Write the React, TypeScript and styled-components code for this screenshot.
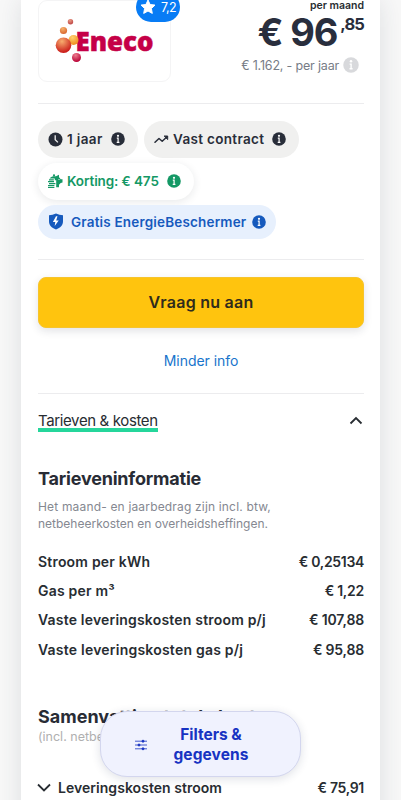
import React from "react";
import styled, { createGlobalStyle, css } from "styled-components";

const Global = createGlobalStyle`
  * { box-sizing: border-box; }
  html, body { margin: 0; height: 800px; overflow: hidden; background: #f8f8f8; }
  body { font-family: Inter, "Noto Sans", sans-serif; color: #282d32; }
`;

const Page = styled.main`
  height: 800px;
  overflow: hidden;
  padding: 0 21px;
`;

const Card = styled.article`
  width: 359px;
  height: 830px;
  padding: 0 16px 0 17px;
  background: #fff;
  box-shadow: 0 0 24px rgba(40, 55, 70, 0.13);
`;

const Label = styled.span<{ $track?: number }>`
  white-space: nowrap;
  letter-spacing: ${(p) => p.$track ?? 0}px;
`;

const Summary = styled.header`
  display: flex;
  justify-content: space-between;
  height: 104px;
  border-bottom: 1px solid #ececee;
`;

const LogoBox = styled.div`
  position: relative;
  width: 133px;
  height: 82px;
  border: 1px solid #f4f4f5;
  border-radius: 9px;
`;

const Rating = styled.div`
  position: absolute;
  top: -9px;
  right: -10px;
  width: 44px;
  height: 30px;
  padding: 0 4px;
  display: flex;
  align-items: center;
  justify-content: space-between;
  border-radius: 15px;
  background: #087cf5;
  color: #fff;
  font-size: 12.5px;
`;

const Price = styled.div`
  display: flex;
  flex-direction: column;
  align-items: flex-end;
`;

const Period = styled.div`
  height: 12px;
  font-size: 10.5px;
  line-height: 11px;
  font-weight: 600;
`;

const Amount = styled.div`
  display: flex;
  gap: 3px;
  height: 39px;
  color: #292e3d;
  font-weight: 700;
  font-size: 38px;
  line-height: 40px;
`;

const Cents = styled.span`
  font-size: 16.5px;
  line-height: 24px;
  font-weight: 700;
  letter-spacing: -0.9px;
`;

const Yearly = styled.div`
  display: flex;
  align-items: center;
  gap: 4px;
  height: 28px;
  padding-right: 5px;
  color: #777c86;
  font-size: 12.5px;
`;

const Chips = styled.section`
  display: flex;
  flex-wrap: wrap;
  align-content: flex-start;
  gap: 5px 6px;
  height: 156px;
  padding-top: 16.5px;
  border-bottom: 1px solid #ececee;
`;

const tones = {
  grey: css`background: #f0f0ef; color: #282d39; height: 37px;`,
  green: css`background: #fff; color: #149865; height: 37px; box-shadow: 0 2px 8px rgba(30, 40, 50, 0.1);`,
  blue: css`background: #e7f0fd; color: #165abd; height: 34px;`,
};

const Chip = styled.div<{ $tone: keyof typeof tones; $width: number }>`
  display: flex;
  align-items: center;
  width: ${(p) => p.$width}px;
  padding: 0 ${(p) => (p.$tone === "blue" ? 10 : 13)}px 0 10px;
  border-radius: 20px;
  font-size: 13.5px;
  font-weight: 600;
  ${(p) => tones[p.$tone]}
  ${Label} { flex: 1; margin-left: ${(p) => (p.$tone === "blue" ? 7 : 4)}px; }
`;

const Actions = styled.section`
  height: 134px;
  padding-top: 17px;
  border-bottom: 1px solid #ececee;
`;

const Apply = styled.button`
  display: block;
  width: 100%;
  height: 51px;
  padding: 0;
  border: 1px solid #f6c42d;
  border-radius: 8px;
  background: #ffc40e;
  box-shadow: 0 3px 9px rgba(30, 40, 60, 0.13);
  color: #302b1c;
  font: 600 16px/49px Inter, sans-serif;
`;

const Less = styled.a`
  display: block;
  margin-top: 22px;
  text-align: center;
  color: #1875cc;
  font-size: 14px;
  line-height: 22px;
`;

const Toggle = styled.div`
  display: flex;
  justify-content: space-between;
  height: 74px;
  padding: 17px 1px 0 0;
  font-size: 15px;
  line-height: 19px;
`;

const Underlined = styled.span`
  height: 19px;
  width: 120px;
  box-shadow: 0 2px #25d69b, 0 -2px #25d69b inset;
`;

const Title = styled.h2`
  margin: 0;
  height: 30px;
  font-size: 18px;
  line-height: 22px;
  font-weight: 650;
  color: #282c35;
`;

const Note = styled.p`
  display: flex;
  flex-direction: column;
  margin: 0;
  height: 49px;
  color: #858891;
  font-size: 12px;
  line-height: 17px;
`;

const Row = styled.div`
  display: flex;
  justify-content: space-between;
  height: 29.2px;
  line-height: 29px;
  font-size: 14px;
  font-weight: 600;
`;

const Totals = styled.section`
  padding-top: 42px;
`;

const SubNote = styled.p`
  margin: -8px 0 28px;
  height: 17px;
  line-height: 17px;
  color: #b0b0b0;
  font-size: 12.5px;
`;

const Expand = styled.span`
  display: flex;
  align-items: center;
  gap: 7px;
  margin-left: -1px;
`;

const Filters = styled.button`
  position: absolute;
  left: 100px;
  top: 711px;
  width: 201px;
  height: 66px;
  display: flex;
  align-items: center;
  padding: 1px 0 0 34px;
  border: 1px solid #d3d6ee;
  border-radius: 27px;
  background: #f0f2fe;
  box-shadow: 0 2px 10px rgba(30, 40, 80, 0.14);
  color: #1733c2;
  font: 650 15.5px/19.5px Inter, sans-serif;
`;

const FilterText = styled.span`
  display: flex;
  flex-direction: column;
  align-items: center;
  width: 80px;
  margin-left: 24px;
`;

const Info = ({ size = 14, mark = "#fff", fill = "currentColor" }) => (
  <svg width={size} height={size} viewBox="0 0 14 14">
    <circle cx="7" cy="7" r="6.800" fill={fill} />
    <circle cx="7" cy="3.800" r="1.100" fill={mark} />
    <path d="M5.800 6.200h1.300v4.200M5.700 10.300h2.700" stroke={mark} strokeWidth="1.200" fill="none" />
  </svg>
);

const Clock = () => (
  <svg width="15" height="15" viewBox="0 0 15 15">
    <circle cx="7.500" cy="7.500" r="7" fill="currentColor" />
    <path d="M7.200 3.200v4.500l2.700 2.700" stroke="#f0f0ef" strokeWidth="1.300" fill="none" />
  </svg>
);

const Trend = () => (
  <svg width="15" height="14" viewBox="0 0 15 14" fill="none" stroke="currentColor" strokeWidth="1.500" strokeLinecap="round" strokeLinejoin="round">
    <path d="M1 10.300 5 6.500l3.200 2.800 4.800-4.500" />
    <path d="M10.500 4h3.200v3.200z" fill="currentColor" strokeWidth="1" />
  </svg>
);

const Piggy = () => (
  <svg width="15" height="15" viewBox="0 0 15 15" fill="currentColor">
    <path d="M1.500 4.500C3 2.500 5.500 2 8 2.300L11 .8v2.400c.8.5 1.300 1.200 1.600 2h1.900v3.200l-1.800.7-1.700 1.700v2.400H8.200V6.300H6.800V4.500z" />
    <circle cx="6" cy="1.300" r="1.100" />
    <path d="M1 5.200h4.800v1.200H1zM0 7.100h6v1.200H0zM1 9h6.400v1.200H1zM0 10.900h6.400v1.200H0zM0 12.800h6.400V14H0z" />
    <circle cx="11" cy="5.500" r=".6" fill="#fff" />
  </svg>
);

const Shield = () => (
  <svg width="16" height="17" viewBox="0 0 16 17">
    <path d="M8 .6q3.400 1.500 7 1.700v6c0 4-2.500 6.500-7 8.200C3.500 14.800 1 12.300 1 8.300v-6Q4.600 2.100 8 .6z" fill="currentColor" />
    <path d="M8 3.300 4.900 8.900h2.400l-.6 4 4-5.500H8.200l1.300-4.100z" fill="#fff" />
  </svg>
);

const Star = () => (
  <svg width="16" height="16" viewBox="0 0 16 16">
    <path d="m8 1 2.100 4.500 4.900.6-3.600 3.400.9 4.900L8 12l-4.300 2.400.9-4.900L1 6.100l4.900-.6z" fill="#fff" stroke="#fff" strokeLinejoin="round" />
  </svg>
);

const Chevron = ({ up = false }) => (
  <svg width="14" height="19" viewBox="0 0 14 19" fill="none" stroke="#282d32" strokeWidth="1.800">
    <path d={up ? "M1.500 12.500 7 7l5.500 5.500" : "M1 6.500 7 12.500l6-6"} />
  </svg>
);

const Sliders = () => (
  <svg width="12" height="12" viewBox="0 0 12 12" stroke="currentColor" fill="currentColor">
    <path d="M0 2.200h12M0 6h12M0 9.800h12" strokeWidth=".8" />
    <circle cx="8" cy="2.200" r="1" /><circle cx="4" cy="6" r="1" /><circle cx="8" cy="9.800" r="1" />
  </svg>
);

const Ball = ({ id, x, y, r, a, b }: { id: string; x: number; y: number; r: number; a: string; b: string }) => (
  <>
    <radialGradient id={id} cx=".4" cy=".25" r=".75">
      <stop offset="0" stopColor={a} /><stop offset="1" stopColor={b} />
    </radialGradient>
    <circle cx={x} cy={y} r={r} fill={`url(#${id})`} />
  </>
);

const Eneco = () => (
  <svg width="131" height="80" viewBox="39 1 131 80">
    <text x="75.500" y="50.500" textLength="78" lengthAdjust="spacingAndGlyphs" fontFamily="Noto Sans" fontWeight="900" fontSize="27" fill="#c50047" stroke="#c50047" strokeWidth=".5">Eneco</text>
    <Ball id="b1" x={70.5} y={21.8} r={2.7} a="#e99a83" b="#bd4444" />
    <Ball id="b2" x={63.5} y={30.5} r={3.6} a="#f5b36c" b="#d9652e" />
    <Ball id="b3" x={73.5} y={40} r={5} a="#ffd16f" b="#ef8d1e" />
    <Ball id="b4" x={63.5} y={45.3} r={7.8} a="#f7ad6e" b="#c91717" />
    <Ball id="b5" x={76.5} y={57.5} r={4.5} a="#ed7d8e" b="#b80035" />
  </svg>
);

const rates = [
  { name: "Stroom per kWh", price: "€ 0,25134", nameTrack: 0.2, priceTrack: -0.32 },
  { name: "Gas per m³", price: "€ 1,22", nameTrack: 0.2, priceTrack: -0.25 },
  { name: "Vaste leveringskosten stroom p/j", price: "€ 107,88", nameTrack: 0.19, priceTrack: -0.15 },
  { name: "Vaste leveringskosten gas p/j", price: "€ 95,88", nameTrack: 0.22, priceTrack: -0.2 },
];

export default function App() {
  return (
    <>
      <Global />
      <Page>
        <Card>
          <Summary>
            <LogoBox>
              <Eneco />
              <Rating><Star /><Label $track={-0.6}>7,2</Label></Rating>
            </LogoBox>
            <Price>
              <Period><Label>per maand</Label></Period>
              <Amount><Label $track={-1.1}>€ 96</Label><Cents>,85</Cents></Amount>
              <Yearly><Label $track={-0.18}>€ 1.162, - per jaar</Label><Info size={16} fill="#d8d9dc" /></Yearly>
            </Price>
          </Summary>
          <Chips>
            <Chip $tone="grey" $width={100}><Clock /><Label $track={0.35}>1 jaar</Label><Info /></Chip>
            <Chip $tone="grey" $width={155}><Trend /><Label $track={0.32}>Vast contract</Label><Info /></Chip>
            <Chip $tone="green" $width={156}><Piggy /><Label $track={-0.1}>Korting: € 475</Label><Info /></Chip>
            <Chip $tone="blue" $width={238}><Shield /><Label $track={0.18}>Gratis EnergieBeschermer</Label><Info /></Chip>
          </Chips>
          <Actions>
            <Apply><Label $track={0.25}>Vraag nu aan</Label></Apply>
            <Less><Label $track={-0.05}>Minder info</Label></Less>
          </Actions>
          <Toggle>
            <Underlined><Label $track={-0.37}>Tarieven &amp; kosten</Label></Underlined>
            <Chevron up />
          </Toggle>
          <Title><Label $track={-0.2}>Tarieveninformatie</Label></Title>
          <Note>
            <Label $track={0.17}>Het maand- en jaarbedrag zijn incl. btw,</Label>
            <Label>netbeheerkosten en overheidsheffingen.</Label>
          </Note>
          {rates.map((r) => (
            <Row key={r.name}><Label $track={r.nameTrack}>{r.name}</Label><Label $track={r.priceTrack}>{r.price}</Label></Row>
          ))}
          <Totals>
            <Title><Label>Samenvatting totale kosten</Label></Title>
            <SubNote><Label>(incl. netbeheerkosten)</Label></SubNote>
            <Row><Expand><Chevron /><Label $track={0.04}>Leveringskosten stroom</Label></Expand><Label $track={-0.3}>€ 75,91</Label></Row>
          </Totals>
        </Card>
      </Page>
      <Filters>
        <Sliders />
        <FilterText><Label>Filters &amp;</Label><Label $track={0.1}>gegevens</Label></FilterText>
      </Filters>
    </>
  );
}
